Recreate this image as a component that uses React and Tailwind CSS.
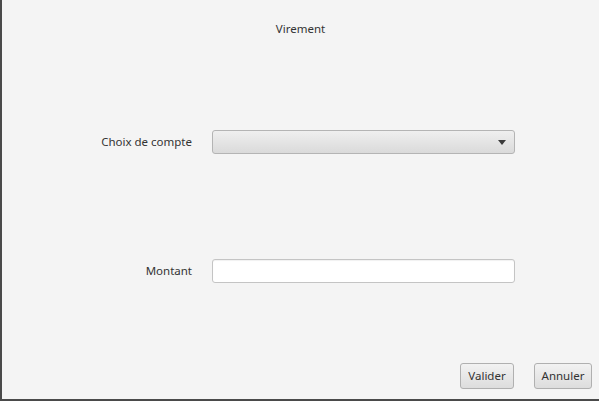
export default function App() {
  return (
    <div className="w-[599px] h-[401px] bg-[#f4f4f4] border-l-2 border-b-2 border-[#4a4a4a] flex flex-col text-[11.5px] text-[#333] font-['Noto_Sans',sans-serif]">
      <div className="pt-[20px] text-center leading-[18px]">Virement</div>

      <div className="mt-[92px] flex items-center h-[24px]">
        <div className="w-[190px] text-right leading-[16px]">Choix de compte</div>
        <div className="ml-[20px] w-[303px] h-[24px] rounded-[3px] border border-[#b4b4b4] bg-gradient-to-b from-[#efefef] to-[#dadada] flex items-center justify-end pr-[8px]">
          <svg width="8" height="5" viewBox="0 0 8 5">
            <path d="M0 0 L8 0 L4 5 Z" fill="#3a3a3a" />
          </svg>
        </div>
      </div>

      <div className="mt-[105px] flex items-center h-[24px]">
        <div className="w-[190px] text-right leading-[16px]">Montant</div>
        <div className="ml-[20px] w-[303px] h-[24px] rounded-[3px] border border-[#c4c4c4] bg-white shadow-[inset_0_1px_1px_rgba(0,0,0,0.06)]" />
      </div>

      <div className="mt-auto mb-[10px] flex justify-end gap-[20px] pr-[7px]">
        <button className="w-[54px] h-[26px] rounded-[3px] border border-[#b0b0b0] bg-gradient-to-b from-[#f2f2f2] to-[#dddddd] leading-[16px]">Valider</button>
        <button className="w-[58px] h-[26px] rounded-[3px] border border-[#b0b0b0] bg-gradient-to-b from-[#f2f2f2] to-[#dddddd] leading-[16px]">Annuler</button>
      </div>
    </div>
  )
}
